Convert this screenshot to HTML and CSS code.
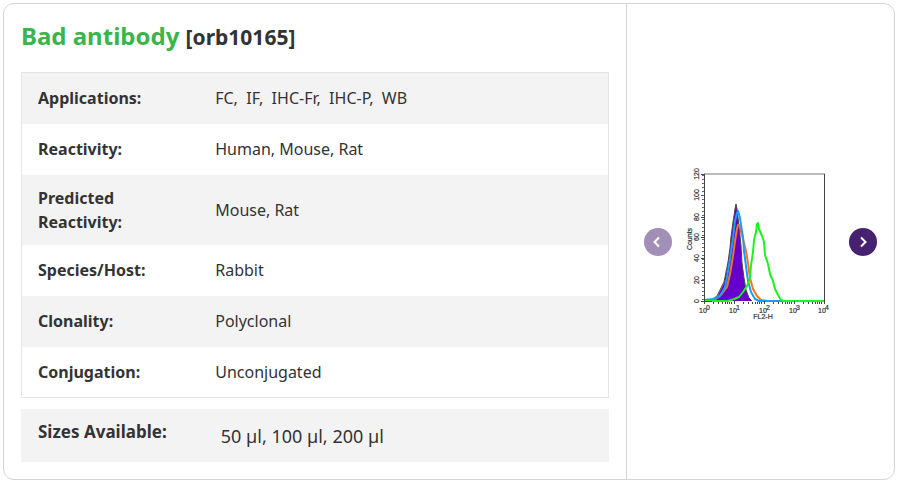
FILE: index.html
```html
<!DOCTYPE html>
<html lang="en">
<head>
<meta charset="utf-8">
<title>Bad antibody [orb10165]</title>
<link rel="stylesheet" href="styles.css">
</head>
<body>
<article class="card">
  <section class="details">
    <h1 class="title"><a href="#">Bad antibody</a> <span class="code">[orb10165]</span></h1>
    <table class="specs">
      <tbody>
        <tr><th scope="row">Applications:</th><td>FC,&nbsp; IF,&nbsp; IHC-Fr,&nbsp; IHC-P,&nbsp; WB</td></tr>
        <tr><th scope="row">Reactivity:</th><td>Human, Mouse, Rat</td></tr>
        <tr><th scope="row">Predicted Reactivity:</th><td>Mouse, Rat</td></tr>
        <tr><th scope="row">Species/Host:</th><td>Rabbit</td></tr>
        <tr><th scope="row">Clonality:</th><td>Polyclonal</td></tr>
        <tr><th scope="row">Conjugation:</th><td>Unconjugated</td></tr>
      </tbody>
    </table>
    <dl class="sizes">
      <dt>Sizes Available:</dt>
      <dd>50 µl, 100 µl, 200 µl</dd>
    </dl>
  </section>
  <section class="gallery">
    <button class="arrow" type="button" aria-label="Previous image" disabled>
      <svg viewBox="0 0 28 28"><path d="M15 9.500L10.500 14L15 18.500"/></svg>
    </button>
    <svg class="chart" viewBox="672 161 177 160" role="img" aria-label="Flow cytometry histogram">
      <path class="fill" d="M706 300L713 299L717 296L720 290L724 282L726 272L728 262L730 248L731 236L733 222L735 208L736 203L737 208L739 225L741 245L742 262L744 277L746 289L749 297L752 300Z"/>
      <path class="outline" d="M713 298L717 295L720 289L724 281L726 271L728 261L730 247L731 236L733 221L735 208L736 203L737 208L739 225L741 245L742 262L744 277L746 289L749 297L752 300"/>
      <path class="curve orange" d="M704 299L714 299L721 294L727 286L730 273L733 255L735 240L737 228L738 224L740 224L741 231L743 238L746 250L748 262L750 277L753 288L757 295L761 299L768 300L786 300"/>
      <path class="curve blue" d="M704 299L713 298L720 295L725 286L727 276L730 258L733 237L735 220L737 212L738 210L740 217L741 224L743 236L744 250L746 265L748 280L751 291L755 298L759 300L783 300"/>
      <path class="curve green" d="M704 300L728 300L734 298L739 296L743 291L747 285L750 277L751 264L753 251L754 239L756 231L757 223L758 222L759 228L762 235L764 241L765 254L768 263L770 273L773 280L775 288L778 294L781 299L784 300L824 300"/>
      <path class="top" d="M704 173H825"/>
      <path class="axis" d="M704.500 173V303M824.500 173V303M704 300.500H712M701 173.500H704M701 194.500H704M701 216.500H704M701 236.500H704M701 257.500H704M701 279.500H704M701 300.500H704M734.500 300V303M764.500 300V303M794.500 300V303"/>
      <path class="minor" d="M703 174V300"/>
      <path class="ticks" d="M713.500 301V303M718.500 301V303M722.500 301V303M725.500 301V303M727.500 301V303M729.500 301V303M731.500 301V303M743.500 301V303M748.500 301V303M752.500 301V303M755.500 301V303M757.500 301V303M759.500 301V303M761.500 301V303M773.500 301V303M778.500 301V303M782.500 301V303M785.500 301V303M787.500 301V303M789.500 301V303M791.500 301V303M803.500 301V303M808.500 301V303M812.500 301V303M815.500 301V303M817.500 301V303M819.500 301V303M821.500 301V303"/>
      <g class="labels">
        <text transform="translate(699 173) rotate(-90)">120</text>
        <text transform="translate(699 194) rotate(-90)">100</text>
        <text transform="translate(699 216) rotate(-90)">80</text>
        <text transform="translate(699 236) rotate(-90)">60</text>
        <text transform="translate(699 257) rotate(-90)">40</text>
        <text transform="translate(699 279) rotate(-90)">20</text>
        <text transform="translate(699 300) rotate(-90)">0</text>
        <text transform="translate(692 238) rotate(-90)">Counts</text>
        <text x="703" y="312">10</text><text x="708" y="309">0</text>
        <text x="733" y="312">10</text><text x="738" y="309">1</text>
        <text x="763" y="312">10</text><text x="768" y="309">2</text>
        <text x="793" y="312">10</text><text x="798" y="309">3</text>
        <text x="822" y="312">10</text><text x="827" y="309">4</text>
        <text x="763" y="318">FL2-H</text>
      </g>
    </svg>
    <button class="arrow" type="button" aria-label="Next image">
      <svg viewBox="0 0 28 28"><path d="M12 9.500L16.500 14L12 18.500"/></svg>
    </button>
  </section>
</article>
</body>
</html>
```
FILE: styles.css
```css
* {
  box-sizing: border-box;
}

body {
  margin: 0;
  padding: 3px 4px 4px 3px;
  background: #fff;
  color: #333;
  font: 16px/24px "Noto Sans", sans-serif;
}

.card {
  display: grid;
  grid-template-columns: minmax(0, 7fr) minmax(0, 3fr);
  border: 1px solid #d5d5d5;
  border-radius: 11px;
}

.details {
  padding: 16px 17px 17px;
  border-right: 1px solid #d5d5d5;
}

.title {
  margin: 0 0 20px;
  font-size: 24px;
  line-height: 32px;
}

.title a {
  color: #39b54a;
  text-decoration: none;
}

.code {
  font-size: 21px;
  line-height: 24px;
}

.specs {
  width: 100%;
  border: 1px solid #e4e4e4;
  border-collapse: collapse;
}

.specs tr:nth-child(odd) {
  background: #f3f3f3;
}

.specs th,
.specs td {
  height: 51px;
  padding: 11px 16px;
  text-align: left;
  vertical-align: middle;
}

.specs th {
  width: 33%;
  padding-right: 40px;
}

.specs td {
  padding-left: 0;
}

.sizes {
  display: flex;
  margin: 11px 0 0;
  padding: 11px 17px 14px;
  background: #f3f3f3;
}

.sizes dt {
  width: 33%;
  font-size: 17px;
  font-weight: bold;
}

.sizes dd {
  margin: 0;
  padding-top: 4px;
  font-size: 18px;
}

.gallery {
  display: flex;
  align-items: center;
  padding: 0 17px;
}

.arrow {
  flex: none;
  width: 28px;
  height: 28px;
  padding: 0;
  border: 0;
  border-radius: 50%;
  background: #452170;
}

.arrow:disabled {
  background: #a28fb7;
}

.arrow svg {
  display: block;
  fill: none;
  stroke: #fff;
  stroke-width: 2;
}

.chart {
  flex: 1;
  min-width: 0;
  fill: none;
}

.fill {
  fill: #60c;
}

.outline {
  stroke: #444;
  stroke-width: 1;
}

.curve {
  stroke-width: 2;
  stroke-linejoin: round;
}

.orange {
  stroke: #f27522;
}

.blue {
  stroke: #1e9bf5;
}

.green {
  stroke: #1bf51b;
}

.top {
  stroke: #bbb;
  stroke-width: 2;
}

.axis,
.ticks {
  stroke: #444;
}

.minor {
  stroke: #666;
  stroke-width: 2;
  stroke-dasharray: 1 3;
}

.labels {
  fill: #333;
  stroke: #333;
  stroke-width: 0.2;
  font: 7px "Liberation Sans", sans-serif;
  text-anchor: middle;
}
```
